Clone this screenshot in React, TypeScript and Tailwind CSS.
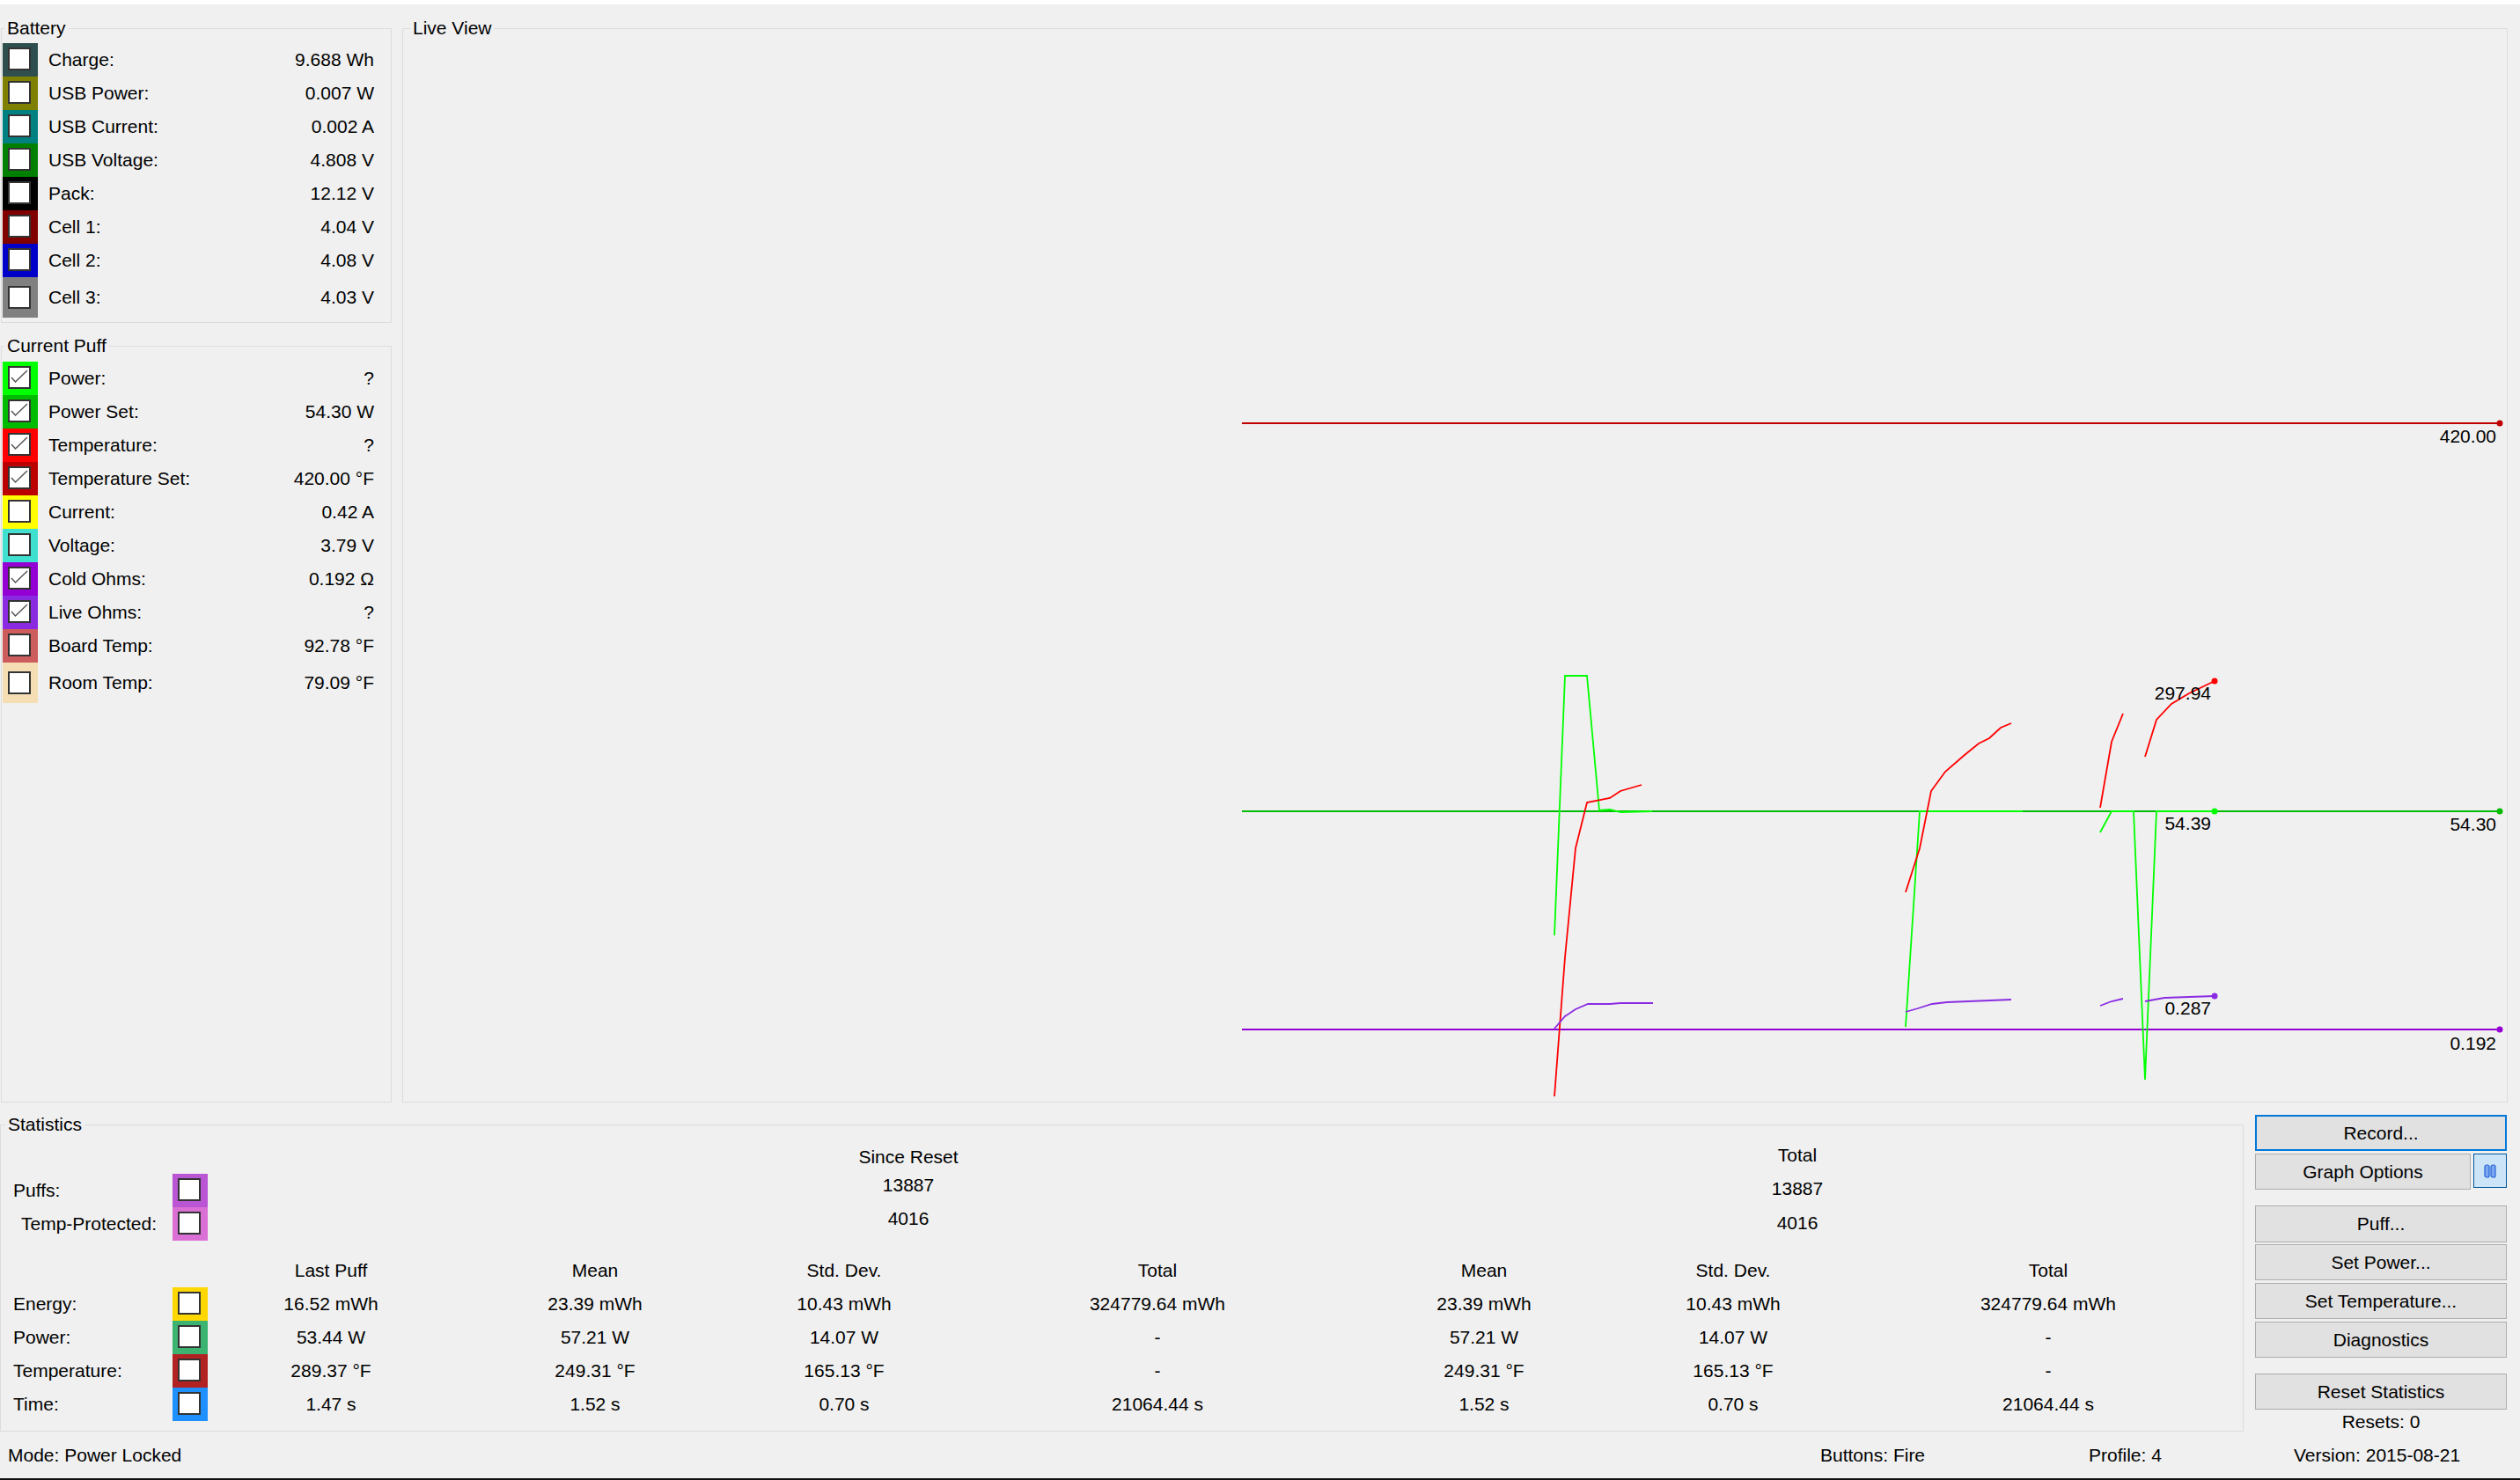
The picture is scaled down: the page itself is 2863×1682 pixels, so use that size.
import React from 'react'
import clsx from 'clsx'

type Reading = { label: string; value: string; color: string; checked?: boolean; tall?: boolean }

const battery: Reading[] = [
  { label: 'Charge:', value: '9.688 Wh', color: 'bg-[#2f4f4f]' },
  { label: 'USB Power:', value: '0.007 W', color: 'bg-[#808000]' },
  { label: 'USB Current:', value: '0.002 A', color: 'bg-[#008080]' },
  { label: 'USB Voltage:', value: '4.808 V', color: 'bg-[#008000]' },
  { label: 'Pack:', value: '12.12 V', color: 'bg-[#000000]' },
  { label: 'Cell 1:', value: '4.04 V', color: 'bg-[#800000]' },
  { label: 'Cell 2:', value: '4.08 V', color: 'bg-[#0000c8]' },
  { label: 'Cell 3:', value: '4.03 V', color: 'bg-[#808080]', tall: true },
]

const puff: Reading[] = [
  { label: 'Power:', value: '?', color: 'bg-[#00ff00]', checked: true },
  { label: 'Power Set:', value: '54.30 W', color: 'bg-[#00bb00]', checked: true },
  { label: 'Temperature:', value: '?', color: 'bg-[#ff0000]', checked: true },
  { label: 'Temperature Set:', value: '420.00 °F', color: 'bg-[#bb0000]', checked: true },
  { label: 'Current:', value: '0.42 A', color: 'bg-[#ffff00]' },
  { label: 'Voltage:', value: '3.79 V', color: 'bg-[#40e0d0]' },
  { label: 'Cold Ohms:', value: '0.192 Ω', color: 'bg-[#9400d3]', checked: true },
  { label: 'Live Ohms:', value: '?', color: 'bg-[#8a2be2]', checked: true },
  { label: 'Board Temp:', value: '92.78 °F', color: 'bg-[#cd5c5c]' },
  { label: 'Room Temp:', value: '79.09 °F', color: 'bg-[#f5deb3]', tall: true },
]

const colW = ['w-[280px]', 'w-[320px]', 'w-[246px]', 'w-[466px]', 'w-[276px]', 'w-[290px]', 'w-[426px]']
const headers = ['Last Puff', 'Mean', 'Std. Dev.', 'Total', 'Mean', 'Std. Dev.', 'Total']

const statRows = [
  {
    label: 'Energy:',
    color: 'bg-[#ffd700]',
    cells: ['16.52 mWh', '23.39 mWh', '10.43 mWh', '324779.64 mWh', '23.39 mWh', '10.43 mWh', '324779.64 mWh'],
  },
  { label: 'Power:', color: 'bg-[#3cb371]', cells: ['53.44 W', '57.21 W', '14.07 W', '-', '57.21 W', '14.07 W', '-'] },
  {
    label: 'Temperature:',
    color: 'bg-[#b22222]',
    cells: ['289.37 °F', '249.31 °F', '165.13 °F', '-', '249.31 °F', '165.13 °F', '-'],
  },
  {
    label: 'Time:',
    color: 'bg-[#1e90ff]',
    cells: ['1.47 s', '1.52 s', '0.70 s', '21064.44 s', '1.52 s', '0.70 s', '21064.44 s'],
  },
]

// chart traces, in page pixels
const power = [
  [[1766, 1063], [1778, 768], [1803, 768], [1817, 921], [1829, 920], [1841, 923], [1877, 922]],
  [[2165, 1167], [2181, 922], [2298, 922]],
  [[2386, 946], [2399, 922], [2424, 922], [2437, 1227], [2450, 922], [2516, 922]],
]
const temperature = [
  [[1766, 1246], [1778, 1088], [1790, 964], [1803, 912], [1829, 907], [1841, 899], [1865, 892]],
  [[2165, 1014], [2181, 964], [2194, 899], [2210, 877], [2232, 858], [2248, 845], [2260, 839], [2273, 827], [2285, 822]],
  [[2386, 918], [2399, 843], [2412, 811]],
  [[2437, 860], [2450, 818], [2467, 800], [2487, 788], [2516, 774]],
]
const liveOhms = [
  [[1766, 1169], [1778, 1155], [1790, 1147], [1804, 1141], [1829, 1141], [1841, 1140], [1878, 1140]],
  [[2165, 1150], [2179, 1146], [2195, 1141], [2212, 1139], [2285, 1136]],
  [[2386, 1143], [2399, 1138], [2412, 1135]],
  [[2437, 1138], [2459, 1134], [2516, 1132]],
]

const pts = (p: number[][]) => p.map(([x, y]) => `${x},${y}`).join(' ')

function Check({ checked }: { checked?: boolean }) {
  return (
    <span className="block w-[26px] h-[26px] border-2 border-[#333333] bg-white">
      {checked && (
        <svg width="22" height="22" viewBox="0 0 22 22">
          <polyline points="2,11 6.5,16 20,3" fill="none" stroke="#555555" strokeWidth="1.5" />
        </svg>
      )}
    </span>
  )
}

function Swatch({ color, checked, tall }: { color: string; checked?: boolean; tall?: boolean }) {
  return (
    <div className={clsx('w-[40px] shrink-0 pl-[6px]', tall ? 'h-[46px] pt-[10px]' : 'h-[38px] pt-[5px]', color)}>
      <Check checked={checked} />
    </div>
  )
}

function ReadingRow({ r }: { r: Reading }) {
  return (
    <div className="flex items-center">
      <Swatch color={r.color} checked={r.checked} tall={r.tall} />
      <span className="ml-[12px]">{r.label}</span>
      <span className="ml-auto mr-[19px]">{r.value}</span>
    </div>
  )
}

function Button({
  children,
  className,
  focused,
}: {
  children: React.ReactNode
  className?: string
  focused?: boolean
}) {
  return (
    <button
      className={clsx(
        'flex items-center justify-center bg-[#e1e1e1] text-black',
        focused ? 'border-2 border-[#0078d7]' : 'border border-[#adadad]',
        className,
      )}
    >
      {children}
    </button>
  )
}

export default function App() {
  return (
    <div className="w-[2863px] h-[1682px] overflow-hidden bg-[#f0f0f0] flex flex-col text-[21px] leading-[24px] text-black font-['Liberation_Sans',Arial,sans-serif]">
      <div className="h-[5px] shrink-0 bg-white" />

      <div className="flex h-[1248px] shrink-0 pt-[15px]">
        <div className="w-[445px] pl-[1px] flex flex-col">
          <fieldset className="border border-[#dcdcdc] pl-[1px] pt-[5px] pb-[5px]">
            <legend className="ml-[2px] px-[3px]">Battery</legend>
            {battery.map((r) => (
              <ReadingRow key={r.label} r={r} />
            ))}
          </fieldset>
          <fieldset className="mt-[14px] flex-1 border border-[#dcdcdc] pl-[1px] pt-[6px]">
            <legend className="ml-[2px] px-[3px]">Current Puff</legend>
            {puff.map((r) => (
              <ReadingRow key={r.label} r={r} />
            ))}
          </fieldset>
        </div>

        <fieldset className="ml-[12px] w-[2392px] border border-[#dcdcdc]">
          <legend className="ml-[8px] px-[3px]">Live View</legend>
          <svg width="2390" height="1208" viewBox="458 44 2390 1208" className="block">
            <g fontFamily="Liberation Sans, Arial, sans-serif" fontSize="21" textAnchor="end" fill="#000">
              <line x1="1411" y1="481" x2="2840" y2="481" stroke="#c00000" strokeWidth="2" />
              <circle cx="2840" cy="481" r="3.5" fill="#c00000" />
              <text x="2836" y="503">420.00</text>

              <line x1="1411" y1="922" x2="2840" y2="922" stroke="#00bb00" strokeWidth="2" />
              <circle cx="2840" cy="922" r="3.5" fill="#00bb00" />
              <text x="2836" y="944">54.30</text>

              <line x1="1411" y1="1170" x2="2840" y2="1170" stroke="#9400d3" strokeWidth="2" />
              <circle cx="2840" cy="1170" r="3.5" fill="#9400d3" />
              <text x="2836" y="1193">0.192</text>

              {power.map((p, i) => (
                <polyline key={'p' + i} points={pts(p)} fill="none" stroke="#00ff00" strokeWidth="1.8" />
              ))}
              <circle cx="2516" cy="922" r="3.5" fill="#00ff00" />
              <text x="2512" y="943">54.39</text>

              {temperature.map((p, i) => (
                <polyline key={'t' + i} points={pts(p)} fill="none" stroke="#ff0000" strokeWidth="1.8" />
              ))}
              <circle cx="2516" cy="774" r="3.5" fill="#ff0000" />
              <text x="2512" y="795">297.94</text>

              {liveOhms.map((p, i) => (
                <polyline key={'o' + i} points={pts(p)} fill="none" stroke="#8a2be2" strokeWidth="1.8" />
              ))}
              <circle cx="2516" cy="1132" r="3.5" fill="#8a2be2" />
              <text x="2512" y="1153">0.287</text>
            </g>
          </svg>
        </fieldset>
      </div>

      <div className="flex h-[361px] shrink-0 mt-[13px]">
        <fieldset className="w-[2549px] border border-[#dcdcdc] pb-[11px]">
          <legend className="ml-[5px] px-[3px]">Statistics</legend>
          <div className="flex h-[135px]">
            <div className="w-[235px] pt-[44px]">
              <div className="flex items-center">
                <span className="flex-1 pl-[14px]">Puffs:</span>
                <Swatch color="bg-[#ba55d3]" />
              </div>
              <div className="flex items-center">
                <span className="flex-1 pl-[23px]">Temp-Protected:</span>
                <Swatch color="bg-[#da70d6]" />
              </div>
            </div>
            <div className="ml-[646px] w-[300px] pt-[13px] text-center">
              <div>Since Reset</div>
              <div className="mt-[8px]">13887</div>
              <div className="mt-[14px]">4016</div>
            </div>
            <div className="ml-[710px] w-[300px] pt-[11px] text-center">
              <div>Total</div>
              <div className="mt-[14px]">13887</div>
              <div className="mt-[15px]">4016</div>
            </div>
          </div>

          <div className="flex h-[38px] items-center">
            <div className="w-[235px]" />
            {headers.map((h, i) => (
              <div key={i} className={clsx(colW[i], 'text-center')}>
                {h}
              </div>
            ))}
          </div>
          {statRows.map((row) => (
            <div key={row.label} className="flex items-center">
              <span className="w-[195px] pl-[14px]">{row.label}</span>
              <Swatch color={row.color} />
              {row.cells.map((c, i) => (
                <div key={i} className={clsx(colW[i], 'text-center')}>
                  {c}
                </div>
              ))}
            </div>
          ))}
        </fieldset>

        <div className="ml-[13px] w-[286px] pt-[1px] flex flex-col">
          <Button focused className="h-[41px]">
            Record...
          </Button>
          <div className="mt-[3px] flex items-start">
            <Button className="w-[245px] h-[41px]">Graph Options</Button>
            <button className="ml-[3px] w-[38px] h-[39px] flex items-center justify-center bg-[#cce4f7] border border-[#005499]">
              <svg width="14" height="16" viewBox="0 0 14 16">
                <rect x="1" y="1" width="5" height="14" rx="2" fill="#7aa7ef" stroke="#2463d6" strokeWidth="1.2" />
                <rect x="8" y="1" width="5" height="14" rx="2" fill="#7aa7ef" stroke="#2463d6" strokeWidth="1.2" />
              </svg>
            </button>
          </div>
          <Button className="mt-[18px] h-[42px]">Puff...</Button>
          <Button className="mt-[2px] h-[41px]">Set Power...</Button>
          <Button className="mt-[3px] h-[41px]">Set Temperature...</Button>
          <Button className="mt-[3px] h-[41px]">Diagnostics</Button>
          <Button className="mt-[18px] h-[41px]">Reset Statistics</Button>
          <div className="mt-[3px] text-center leading-[22px]">Resets: 0</div>
        </div>
      </div>

      <div className="flex h-[53px] shrink-0 items-center">
        <span className="w-[2068px] pl-[9px]">Mode: Power Locked</span>
        <span className="w-[305px]">Buttons: Fire</span>
        <span className="w-[233px]">Profile: 4</span>
        <span>Version: 2015-08-21</span>
      </div>
      <div className="h-[2px] shrink-0 bg-[#111111]" />
    </div>
  )
}
